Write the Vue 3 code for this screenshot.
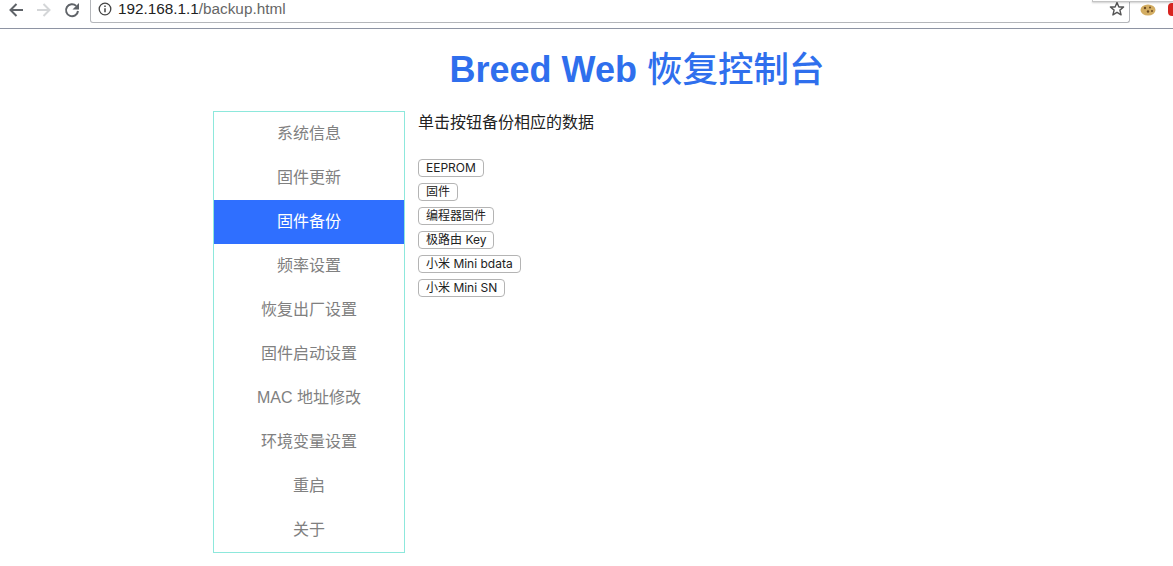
<template>
  <div class="page">
    <header class="toolbar">
      <div class="nav-icons">
        <svg class="nav-icon" viewBox="0 0 16 16" width="16" height="16">
          <path d="M15 8H2.5M8.5 2 2.5 8l6 6" fill="none" stroke="#5f6368" stroke-width="2" />
        </svg>
        <svg class="nav-icon" viewBox="0 0 16 16" width="16" height="16">
          <path d="M1 8h12.5M7.5 2l6 6-6 6" fill="none" stroke="#d4d6d8" stroke-width="2" />
        </svg>
        <svg class="nav-icon" viewBox="0 0 16 16" width="16" height="16">
          <path d="M14 9A6 6 0 1 1 12.2 3.9" fill="none" stroke="#5f6368" stroke-width="2" />
          <path d="M15 1v6.5H8.5z" fill="#5f6368" />
        </svg>
      </div>
      <div class="address">
        <svg class="info-icon" viewBox="0 0 14 14" width="14" height="14">
          <circle cx="7" cy="7" r="5.8" fill="none" stroke="#444" stroke-width="1.3" />
          <path d="M7 6.2v4M7 3.6v1.4" stroke="#444" stroke-width="1.5" />
        </svg>
        <span class="host">192.168.1.1</span><span class="path">/backup.html</span>
        <svg class="star" viewBox="0 0 16 16" width="16" height="16">
          <path d="M8 1.6 9.9 6h4.7l-3.7 3.1 1.2 4.8L8 11.3l-4.1 2.6 1.2-4.8L1.4 6h4.7z" fill="none" stroke="#555" stroke-width="1.4" stroke-linejoin="round" />
        </svg>
      </div>
      <div class="extensions">
        <svg class="cookie" viewBox="0 0 16 12" width="16" height="12">
          <ellipse cx="8" cy="6" rx="7.5" ry="5.5" fill="#d3ad62" />
          <circle cx="5" cy="4" r="1.2" fill="#6b4a22" />
          <circle cx="10" cy="3.4" r="1" fill="#6b4a22" />
          <circle cx="8" cy="7.5" r="1.2" fill="#6b4a22" />
          <circle cx="12" cy="7" r="1" fill="#6b4a22" />
        </svg>
        <span class="ext-red"></span>
      </div>
      <div class="popup-edge"></div>
    </header>

    <h1 class="title">Breed Web <span class="title-cjk">恢复控制台</span></h1>

    <main class="layout">
      <nav class="sidebar">
        <a
          v-for="item in menu"
          :key="item"
          :class="['menu-item', { active: item === current }]"
        >{{ item }}</a>
      </nav>
      <section class="content">
        <p class="hint">单击按钮备份相应的数据</p>
        <div class="buttons">
          <div v-for="b in backups" :key="b" class="btn-row">
            <button class="btn">{{ b }}</button>
          </div>
        </div>
      </section>
    </main>
  </div>
</template>

<script setup>
const current = '固件备份'

const menu = [
  '系统信息',
  '固件更新',
  '固件备份',
  '频率设置',
  '恢复出厂设置',
  '固件启动设置',
  'MAC 地址修改',
  '环境变量设置',
  '重启',
  '关于'
]

const backups = ['EEPROM', '固件', '编程器固件', '极路由 Key', '小米 Mini bdata', '小米 Mini SN']
</script>

<style>
html,
body {
  margin: 0;
  background: #fff;
}
</style>

<style scoped>
.page {
  height: 566px;
  overflow: hidden;
  font-family: "Liberation Sans", "Noto Sans CJK SC", sans-serif;
  color: #000;
}

.toolbar {
  position: relative;
  display: flex;
  align-items: flex-start;
  height: 28px;
  border-bottom: 1px solid #8e94a3;
  box-sizing: content-box;
  overflow: hidden;
}

.nav-icons {
  display: flex;
  flex-shrink: 0;
  gap: 12px;
  padding: 2px 0 0 8px;
  width: 90px;
  box-sizing: border-box;
}

.address {
  display: flex;
  flex-shrink: 0;
  align-items: center;
  width: 1040px;
  height: 23px;
  padding-left: 7px;
  padding-bottom: 5px;
  box-sizing: border-box;
  border: 1px solid #b4b6ba;
  border-top: none;
  border-radius: 0 0 3px 3px;
  font-size: 15.3px;
}

.info-icon {
  margin-right: 6px;
}

.host {
  color: #222;
}

.path {
  color: #666;
}

.star {
  margin-left: auto;
  margin-right: 4px;
}

.extensions {
  display: flex;
  flex-shrink: 0;
  align-items: center;
  padding: 3px 0 0 10px;
  gap: 12px;
}

.ext-red {
  width: 8px;
  height: 13px;
  border-radius: 4px;
  background: #d8231f;
}

.popup-edge {
  position: absolute;
  top: 0;
  right: 0;
  width: 80px;
  height: 1px;
  background: #fff;
  border-bottom: 1px solid #c4c4c4;
  border-left: 1px solid #c4c4c4;
  box-shadow: 0 1px 2px rgba(0, 0, 0, 0.2);
}

.title {
  margin: 18px 0 0 0;
  padding-left: 101px;
  height: 46px;
  text-align: center;
  font-size: 36px;
  line-height: 46px;
  font-weight: 700;
  color: #2f6fed;
}

.title-cjk {
  font-size: 35.5px;
  font-weight: 500;
}

.layout {
  display: flex;
  margin: 18px 0 0 213px;
  gap: 13px;
}

.sidebar {
  display: flex;
  flex-direction: column;
  width: 192px;
  height: 442px;
  box-sizing: border-box;
  border: 1px solid #8de8dc;
}

.menu-item {
  height: 44px;
  line-height: 44px;
  text-align: center;
  font-size: 16px;
  color: #808080;
}

.menu-item.active {
  background: #2f6fff;
  color: #fff;
}

.content {
  font-size: 16px;
  color: #222;
}

.hint {
  margin: 0;
  padding-top: 2px;
  line-height: 20px;
}

.buttons {
  margin-top: 26px;
}

.btn-row {
  height: 24px;
}

.btn {
  height: 18px;
  padding: 0 7px;
  font-family: Inter, "Noto Sans CJK SC", sans-serif;
  font-size: 12px;
  line-height: 16px;
  color: #222;
  background: #fff;
  border: 1px solid #b4b4b4;
  border-radius: 4px;
  vertical-align: top;
}
</style>
